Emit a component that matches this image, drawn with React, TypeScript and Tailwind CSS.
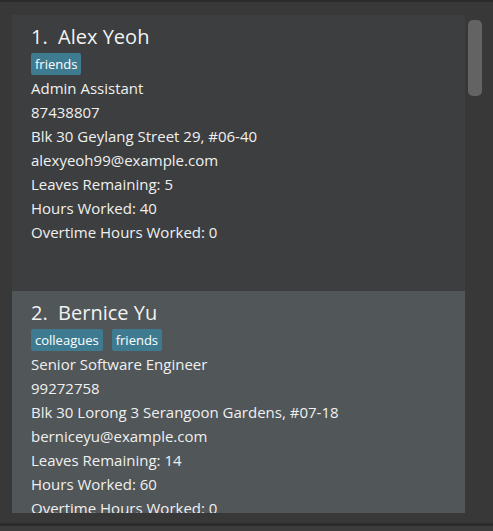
import React from 'react'

type Person = {
  name: string
  tags: string[]
  role: string
  phone: string
  address: string
  email: string
  leaves: number
  hours: number
  overtime: number
}

const people: Person[] = [
  {
    name: 'Alex Yeoh',
    tags: ['friends'],
    role: 'Admin Assistant',
    phone: '87438807',
    address: 'Blk 30 Geylang Street 29, #06-40',
    email: 'alexyeoh99@example.com',
    leaves: 5,
    hours: 40,
    overtime: 0,
  },
  {
    name: 'Bernice Yu',
    tags: ['colleagues', 'friends'],
    role: 'Senior Software Engineer',
    phone: '99272758',
    address: 'Blk 30 Lorong 3 Serangoon Gardens, #07-18',
    email: 'berniceyu@example.com',
    leaves: 14,
    hours: 60,
    overtime: 0,
  },
]

function PersonCard({ p, index, odd }: { p: Person; index: number; odd: boolean }) {
  return (
    <div
      className={`shrink-0 h-[276px] pl-[19px] pt-[10px] ${odd ? 'bg-[#515658]' : 'bg-[#3c3e3f]'}`}
    >
      <div className="text-[20px] leading-[24px] text-[#f2f2f2] whitespace-pre">
        {index}.  {p.name}
      </div>
      <div className="flex gap-[9px] mt-[4px] h-[22px]">
        {p.tags.map((t) => (
          <span
            key={t}
            className="bg-[#3e7b91] text-white text-[13px] leading-[22px] px-[4px] rounded-[2px]"
          >
            {t}
          </span>
        ))}
      </div>
      <div className="mt-[1px] text-[15px] leading-[24px] text-[#f0f0f0]">
        <div>{p.role}</div>
        <div>{p.phone}</div>
        <div>{p.address}</div>
        <div>{p.email}</div>
        <div>Leaves Remaining: {p.leaves}</div>
        <div>Hours Worked: {p.hours}</div>
        <div>Overtime Hours Worked: {p.overtime}</div>
      </div>
    </div>
  )
}

export default function App() {
  return (
    <div
      className="w-[493px] h-[531px] bg-[#383838] flex flex-col overflow-hidden"
      style={{ fontFamily: '"Open Sans", "Noto Sans", sans-serif' }}
    >
      <div className="h-[2px] bg-[#2b2b2b]" />
      <div className="flex h-[521px] pt-[13px] pl-[12px]">
        <div className="w-[453px] h-[498px] flex flex-col overflow-hidden">
          {people.map((p, i) => (
            <PersonCard key={p.name} p={p} index={i + 1} odd={i % 2 === 1} />
          ))}
        </div>
        <div className="w-[22px] pt-[5px] pl-[3px]">
          <div className="w-[14px] h-[76px] rounded-[5px] bg-[#636363]" />
        </div>
      </div>
      <div className="h-[3px] bg-[#2b2b2b]" />
      <div className="flex-1 bg-[#3c3c3c]" />
    </div>
  )
}
